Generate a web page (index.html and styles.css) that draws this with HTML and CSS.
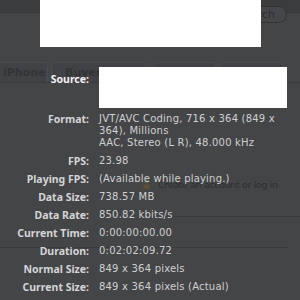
FILE: index.html
```html
<!DOCTYPE html>
<html>
<head>
<meta charset="utf-8">
<link rel="stylesheet" href="styles.css">
</head>
<body>
<div class="screen">
  <div class="backdrop">
    <div class="line line-a"></div>
    <div class="line line-b"></div>
    <div class="ghost-link">
      <svg class="ghost-icon" width="7" height="11" viewBox="0 0 7 11"><circle cx="3.5" cy="2.5" r="2" fill="#5f6b3c"/><path d="M0.5 10 V6.5 Q3.5 4 6.5 6.5 V10 Z" fill="#6a5032"/></svg>
      <span>Create an account or log in</span>
    </div>
  </div>
  <div class="topbar"></div>
  <div class="search"><span>Search</span></div>
  <div class="top-blank"></div>
  <div class="tabs">
    <div class="tab tab-1">iPhone</div>
    <div class="tab tab-2">Buyer</div>
    <div class="tab tab-3"></div>
    <div class="tab tab-4"></div>
  </div>
  <div class="info">
    <div class="label source-label">Source:</div>
    <div class="source-value"></div>

    <div class="label">Format:</div>
    <div class="value">JVT/AVC Coding, 716 x 364 (849 x 364), Millions<br>AAC, Stereo (L R), 48.000 kHz</div>

    <div class="label">FPS:</div>
    <div class="value">23.98</div>

    <div class="label">Playing FPS:</div>
    <div class="value">(Available while playing.)</div>

    <div class="label">Data Size:</div>
    <div class="value">738.57 MB</div>

    <div class="label">Data Rate:</div>
    <div class="value">850.82 kbits/s</div>

    <div class="label">Current Time:</div>
    <div class="value">0:00:00:00.00</div>

    <div class="label">Duration:</div>
    <div class="value">0:02:02:09.72</div>

    <div class="label">Normal Size:</div>
    <div class="value">849 x 364 pixels</div>

    <div class="label">Current Size:</div>
    <div class="value">849 x 364 pixels (Actual)</div>
  </div>
</div>
</body>
</html>
```

FILE: styles.css
```css
html, body {
  margin: 0;
  padding: 0;
}
body {
  width: 300px;
  height: 300px;
  overflow: hidden;
  background: #444547;
  font-family: "DejaVu Sans", "Liberation Sans", sans-serif;
}
.screen {
  position: relative;
  width: 300px;
  height: 300px;
  overflow: hidden;
  background: #444547;
}
.backdrop {
  position: absolute;
  inset: 0;
}
.line {
  position: absolute;
  height: 1px;
  background: #393a3c;
}
.line-a {
  left: 150px;
  top: 216px;
  width: 150px;
}
.line-b {
  left: 0;
  top: 247px;
  width: 288px;
}
.ghost-link {
  position: absolute;
  left: 143px;
  top: 179px;
  display: flex;
  align-items: center;
  gap: 8px;
  white-space: nowrap;
  font-family: "DejaVu Sans", sans-serif;
  font-size: 9.5px;
  letter-spacing: -0.35px;
  color: #2e2f31;
}
.ghost-icon {
  opacity: 0.8;
}
.topbar {
  height: 12px;
  background: #3b3c3e;
  border-bottom: 1px solid #38393b;
}
.top-blank {
  position: absolute;
  left: 40px;
  top: 0;
  width: 221px;
  height: 47px;
  background: #ffffff;
}
.search {
  position: absolute;
  left: 228px;
  top: 6px;
  height: 15px;
  border: 1px solid #323335;
  border-radius: 9px;
  background: #46474a;
  display: flex;
  align-items: center;
  justify-content: flex-end;
  padding-right: 11px;
  box-sizing: content-box;
  width: 46px;
  font-family: "DejaVu Sans", sans-serif;
  font-size: 11px;
  color: #2c2d2f;
}
.tabs {
  display: flex;
  gap: 3px;
  margin-top: 49px;
  height: 20px;
  border-bottom: 1px solid #3a3b3d;
}
.tab {
  height: 20px;
  box-sizing: border-box;
  border: 1px solid #4c4d50;
  border-bottom: none;
  border-radius: 5px 5px 0 0;
  background: #414245;
  font-weight: bold;
  font-size: 11px;
  color: #333436;
  display: flex;
  align-items: center;
  justify-content: flex-start;
}
.tab-1 {
  width: 52px;
  margin-left: -4px;
  padding-left: 6px;
}
.tab-2 {
  width: 95px;
  padding-left: 13px;
}
.tab-3 {
  width: 63px;
  margin-left: 4px;
}
.tab-4 {
  width: 65px;
}
.info {
  position: absolute;
  left: 0;
  top: 67px;
  width: 300px;
  display: grid;
  grid-template-columns: 89px 1fr;
  column-gap: 10px;
  row-gap: 6px;
  font-size: 10px;
  line-height: 12px;
}
.label {
  text-align: right;
  font-family: "Noto Sans", "DejaVu Sans", sans-serif;
  font-weight: bold;
  font-size: 10.5px;
  color: #d4d5d7;
  white-space: nowrap;
}
.source-label {
  padding-top: 6px;
  color: #f2f2f2;
}
.source-value {
  width: 188px;
  height: 41px;
  background: #ffffff;
  margin-bottom: -1px;
}
.value {
  color: #cfd0d2;
  letter-spacing: 0.2px;
  padding-right: 10px;
}
```
